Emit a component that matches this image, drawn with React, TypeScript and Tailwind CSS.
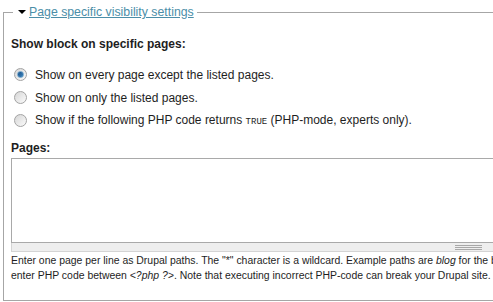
import React from 'react';

function Radio({ checked }: { checked?: boolean }) {
  return (
    <span className="relative flex h-[13px] w-[13px] shrink-0 items-center justify-center rounded-full border border-[#a3a3a3] bg-gradient-to-br from-[#d6d6d6] to-[#fbfbfb]">
      {checked && (
        <span className="h-[7px] w-[7px] rounded-full border border-[#6aa0c8] bg-gradient-to-br from-[#1a4f86] to-[#3d86c0]"></span>
      )}
    </span>
  );
}

export default function App() {
  const options = [
    { label: 'Show on every page except the listed pages.', checked: true },
    { label: 'Show on only the listed pages.', checked: false },
  ];

  return (
    <div className="h-[302px] w-[493px] overflow-hidden bg-white font-['Liberation_Sans',Arial,sans-serif] text-[12px] text-[#1e1e1e]">
      <fieldset className="ml-[3px] mt-[4px] w-[940px] border border-[#a6a6a6] pb-[17px] pl-[7px] pr-[8px]">
        <legend className="ml-[2px] flex items-center pl-[5px] pr-[3px] leading-4">
          <span className="mr-[3px] h-0 w-0 border-l-[4px] border-r-[4px] border-t-[4px] border-l-transparent border-r-transparent border-t-black"></span>
          <a href="#" className="text-[12.3px] text-[#4b8ea8] underline">Page specific visibility settings</a>
        </legend>

        <div className="mt-[16px] font-bold leading-4">Show block on specific pages:</div>

        {/* radios */}
        <div className="mt-[11px] flex flex-col">
          {options.map((o, i) => (
            <label key={i} className="flex h-[23px] items-center gap-[8px] pl-[3px]">
              <Radio checked={o.checked} />
              <span>{o.label}</span>
            </label>
          ))}
          <label className="flex h-[23px] items-center gap-[8px] pl-[3px]">
            <Radio />
            <span>
              Show if the following PHP code returns{' '}
              <code className="font-['Liberation_Mono',monospace] text-[9px]">TRUE</code> (PHP-mode, experts only).
            </span>
          </label>
        </div>

        <div className="mt-[8px] font-bold leading-4">Pages:</div>

        <textarea className="mt-[2px] block h-[85px] w-[914px] resize-none border border-[#a9a9a9] bg-white outline-none"></textarea>
        <div className="flex h-[9px] w-[914px] justify-center border border-t-0 border-[#d4d4d4] bg-[#eeeeee] pt-[2px]">
          <div className="flex w-[27px] flex-col gap-[1px]">
            <div className="h-px bg-[#a8a8a8]"></div>
            <div className="h-px bg-[#a8a8a8]"></div>
            <div className="h-px bg-[#a8a8a8]"></div>
          </div>
        </div>

        <div className="mt-px whitespace-nowrap text-[10.45px] leading-[15px]">
          Enter one page per line as Drupal paths. The "*" character is a wildcard. Example paths are <em>blog</em> for the blog page and <em>blog/*</em> for every personal blog. <em>&lt;front&gt;</em> is the front page. If the PHP-mode is chosen,
          <br />
          enter PHP code between <em>&lt;?php ?&gt;</em>. Note that executing incorrect PHP-code can break your Drupal site.
        </div>
      </fieldset>
    </div>
  );
}
